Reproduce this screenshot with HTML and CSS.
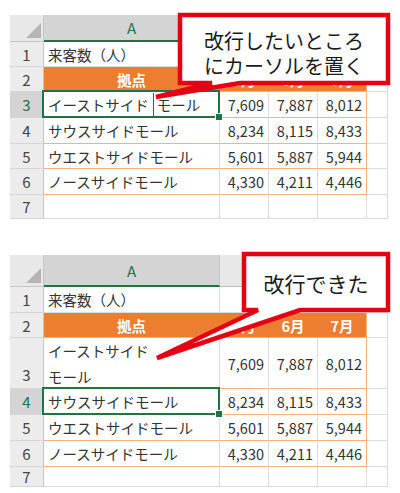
FILE: index.html
```html
<!DOCTYPE html>
<html lang="ja">
<head>
<meta charset="utf-8">
<title>改行</title>
<link rel="stylesheet" href="styles.css">
</head>
<body>
<div class="page">
  <div class="sheet s1">
    <div class="c corner"><div class="tri"></div></div>
    <div class="c ch sel-col">A</div>
    <div class="c ch"></div>
    <div class="c ch"></div>
    <div class="c ch"></div>
    <div class="c ch"></div>

    <div class="c rh">1</div>
    <div class="c txt">来客数（人）</div>
    <div class="c"></div><div class="c"></div><div class="c"></div><div class="c"></div>

    <div class="c rh">2</div>
    <div class="c hd">拠点</div>
    <div class="c hd">5月</div>
    <div class="c hd">6月</div>
    <div class="c hd last">7月</div>
    <div class="c"></div>

    <div class="c rh sel-row">3</div>
    <div class="c txt ob sel">イーストサイド<span class="caret"></span>モール</div>
    <div class="c num ob">7,609</div>
    <div class="c num ob">7,887</div>
    <div class="c num ob last">8,012</div>
    <div class="c"></div>

    <div class="c rh">4</div>
    <div class="c txt ob">サウスサイドモール</div>
    <div class="c num ob">8,234</div>
    <div class="c num ob">8,115</div>
    <div class="c num ob last">8,433</div>
    <div class="c"></div>

    <div class="c rh">5</div>
    <div class="c txt ob">ウエストサイドモール</div>
    <div class="c num ob">5,601</div>
    <div class="c num ob">5,887</div>
    <div class="c num ob last">5,944</div>
    <div class="c"></div>

    <div class="c rh">6</div>
    <div class="c txt ob">ノースサイドモール</div>
    <div class="c num ob">4,330</div>
    <div class="c num ob">4,211</div>
    <div class="c num ob last">4,446</div>
    <div class="c"></div>

    <div class="c rh">7</div>
    <div class="c"></div><div class="c"></div><div class="c"></div><div class="c"></div><div class="c"></div>
  </div>

  <div class="sheet s2">
    <div class="c corner"><div class="tri"></div></div>
    <div class="c ch sel-col">A</div>
    <div class="c ch"></div>
    <div class="c ch"></div>
    <div class="c ch"></div>
    <div class="c ch"></div>

    <div class="c rh">1</div>
    <div class="c txt">来客数（人）</div>
    <div class="c"></div><div class="c"></div><div class="c"></div><div class="c"></div>

    <div class="c rh">2</div>
    <div class="c hd">拠点</div>
    <div class="c hd">5月</div>
    <div class="c hd">6月</div>
    <div class="c hd last">7月</div>
    <div class="c"></div>

    <div class="c rh rh-bottom">3</div>
    <div class="c txt wrap ob">イーストサイド<br>モール</div>
    <div class="c num ob">7,609</div>
    <div class="c num ob">7,887</div>
    <div class="c num ob last">8,012</div>
    <div class="c"></div>

    <div class="c rh sel-row">4</div>
    <div class="c txt ob sel">サウスサイドモール</div>
    <div class="c num ob">8,234</div>
    <div class="c num ob">8,115</div>
    <div class="c num ob last">8,433</div>
    <div class="c"></div>

    <div class="c rh">5</div>
    <div class="c txt ob">ウエストサイドモール</div>
    <div class="c num ob">5,601</div>
    <div class="c num ob">5,887</div>
    <div class="c num ob last">5,944</div>
    <div class="c"></div>

    <div class="c rh">6</div>
    <div class="c txt ob">ノースサイドモール</div>
    <div class="c num ob">4,330</div>
    <div class="c num ob">4,211</div>
    <div class="c num ob last">4,446</div>
    <div class="c"></div>

    <div class="c rh">7</div>
    <div class="c"></div><div class="c"></div><div class="c"></div><div class="c"></div><div class="c"></div>
  </div>

  <svg class="overlay" width="400" height="493" viewBox="0 0 400 493">
    <path class="bubble" d="M180,15 H388 V83 H240 L156,97 L212,83 H180 Z"/>
    <path class="bubble" d="M244,254 H388 V310 H300 L157,358 L258,310 H244 Z"/>
  </svg>
  <div class="note note1">改行したいところ<br>にカーソルを置く</div>
  <div class="note note2">改行できた</div>
</div>
</body>
</html>
```

FILE: styles.css
```css
* { box-sizing: border-box; }
body {
  margin: 0;
  background: #fff;
  font-family: "Noto Sans CJK JP", "Noto Sans", sans-serif;
}
.page {
  position: relative;
  width: 400px;
  height: 493px;
  padding: 15px 12px 0 10px;
  overflow: hidden;
}
.sheet {
  display: grid;
  grid-template-columns: 34px 176px 49px 49px 49px 21px;
}
.s1 { grid-template-rows: 27px 25px 25px 26px 26px 25px 26px 24px; }
.s2 {
  margin-top: 36px;
  grid-template-rows: 32px 26px 25px 51px 26px 26px 26px 20px;
}
.c {
  display: flex;
  align-items: center;
  border-right: 1px solid #dcdcdc;
  border-bottom: 1px solid #dcdcdc;
  font-size: 14.5px;
  color: #333;
  white-space: nowrap;
  padding: 0 4px;
  position: relative;
}
.corner {
  background: #e8e8e8;
  border-right: 1px solid #c6c6c6;
  border-bottom: 1px solid #c6c6c6;
  justify-content: flex-end;
  align-items: flex-end;
  padding: 3px 2px;
}
.tri {
  width: 15px;
  height: 15px;
  background: #b5b5b5;
  clip-path: polygon(100% 0, 100% 100%, 0 100%);
}
.ch {
  background: #e8e8e8;
  border-right: 1px solid #c6c6c6;
  border-bottom: 1px solid #bdbdbd;
  justify-content: center;
  font-size: 15px;
  color: #444;
}
.sel-col {
  background: #d4d4d4;
  color: #217346;
  border-bottom: 2px solid #217346;
}
.rh {
  background: #ececec;
  border-right: 1px solid #c6c6c6;
  border-bottom: 1px solid #d6d6d6;
  justify-content: center;
  font-size: 15px;
  color: #444;
}
.rh-bottom { align-items: flex-end; padding-bottom: 3px; }
.sel-row {
  background: #d4d4d4;
  color: #217346;
}
.txt { padding-left: 4px; }
.wrap {
  white-space: normal;
  align-items: flex-start;
  line-height: 25.5px;
}
.hd {
  background: #ed7d31;
  border-right-color: #ed7d31;
  border-bottom-color: #f4b183;
  color: #fff;
  font-weight: 700;
  justify-content: center;
}
.num { justify-content: flex-end; padding-right: 4px; }
.ob { border-bottom-color: #f4b183; }
.last { border-right-color: #f4b183; }
.sel::after {
  content: "";
  position: absolute;
  left: -2px;
  top: -2px;
  right: -1px;
  bottom: -1px;
  border: 2px solid #217346;
}
.sel::before {
  content: "";
  position: absolute;
  right: -4px;
  bottom: -4px;
  width: 6px;
  height: 6px;
  background: #217346;
  border: 1px solid #fff;
  z-index: 2;
}
.caret {
  display: inline-block;
  width: 1px;
  height: 24px;
  background: #555;
  margin: 0 3px 0 4px;
}
.overlay {
  position: absolute;
  left: 0;
  top: 0;
}
.bubble {
  fill: #fff;
  stroke: #e60014;
  stroke-width: 4.5;
  stroke-linejoin: miter;
}
.note {
  position: absolute;
  display: flex;
  align-items: center;
  justify-content: center;
  text-align: center;
  color: #1a1a1a;
  white-space: nowrap;
}
.note1 {
  left: 182px;
  top: 17px;
  width: 204px;
  height: 71px;
  font-size: 20px;
  line-height: 25px;
}
.note2 {
  left: 246px;
  top: 256px;
  width: 140px;
  height: 54px;
  font-size: 21px;
  line-height: 26px;
}
```
